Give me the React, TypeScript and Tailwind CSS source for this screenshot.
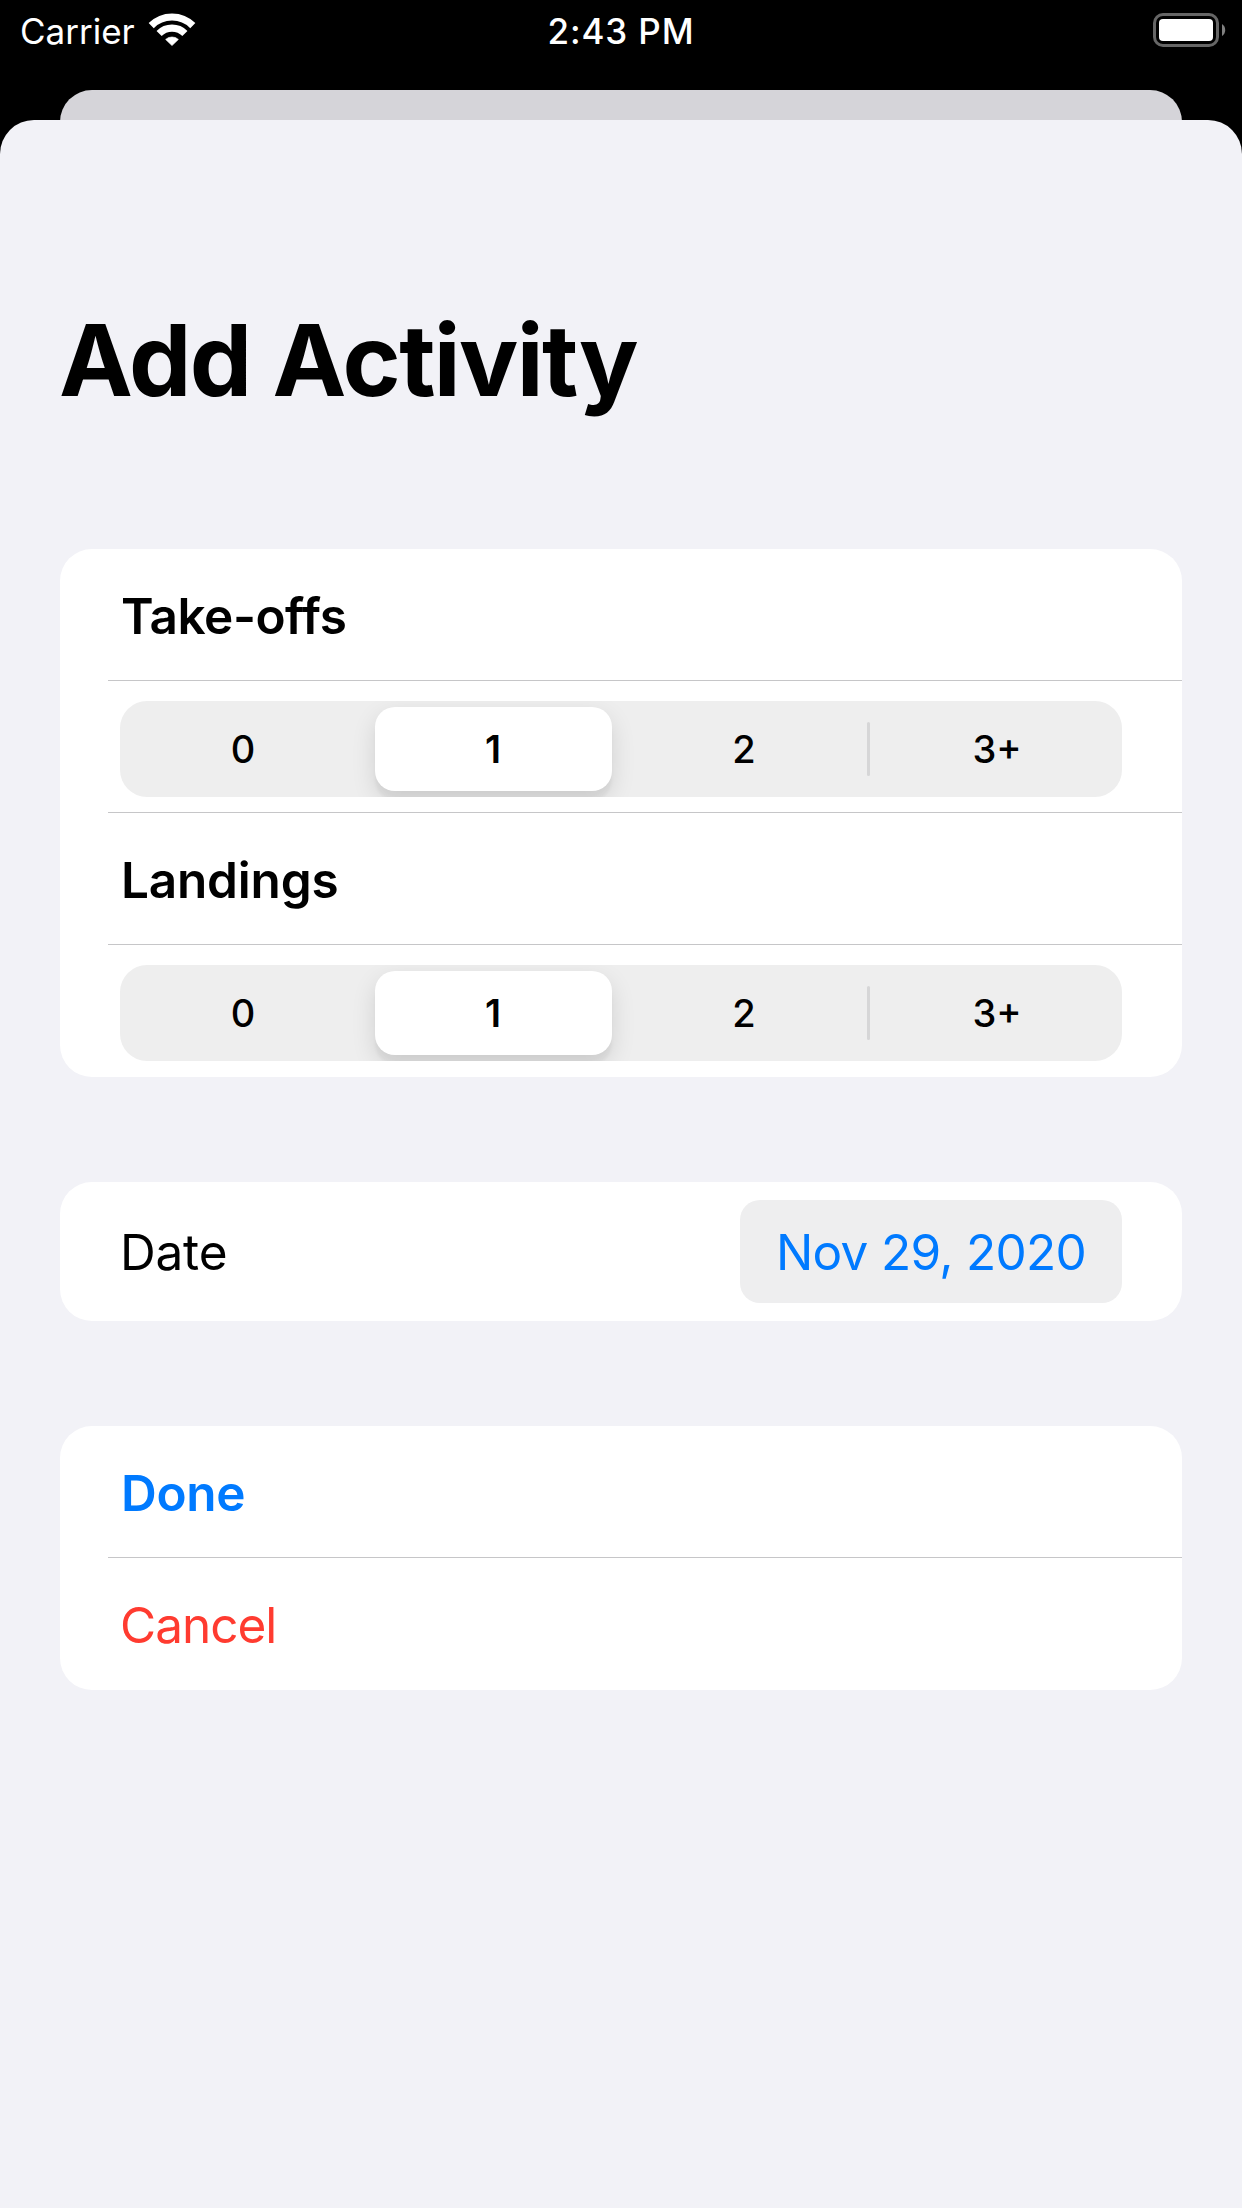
import type { ReactNode } from "react";

function WifiIcon() {
  return (
    <svg className="ml-[13px] mt-[13px] h-[34px] w-[48px]" viewBox="0 0 48 34" fill="none">
      <path d="M3.2 12.6 A29.4 29.4 0 0 1 44.8 12.6" stroke="#fff" strokeWidth="7.2" />
      <path d="M11.1 20.5 A18.2 18.2 0 0 1 36.9 20.5" stroke="#fff" strokeWidth="7.2" />
      <path
        d="M17.6 26.4 A9.6 9.6 0 0 1 30.4 26.4 L24 32.6 Z"
        fill="#fff"
        stroke="#fff"
        strokeWidth="0.6"
        strokeLinejoin="round"
      />
    </svg>
  );
}

function BatteryIcon() {
  return (
    <svg className="mr-[15px] mt-[13px] h-[34px] w-[74px]" viewBox="0 0 74 34" fill="none">
      <rect x="1.5" y="1.5" width="63" height="31" rx="8.5" stroke="#666" strokeWidth="3" />
      <rect x="6" y="6" width="54" height="22" rx="4" fill="#fff" />
      <path d="M69 11 A7.2 7.2 0 0 1 69 23 Z" fill="#808080" />
    </svg>
  );
}

function StatusBar() {
  return (
    <div className="grid h-[90px] grid-cols-3 items-start text-[35px] leading-[44px] text-white">
      <div className="flex pl-[20px]">
        <span className="pt-[9px]">Carrier</span>
        <WifiIcon />
      </div>
      <div className="pt-[9px] text-center font-medium tracking-[0.9px]">2:43 PM</div>
      <div className="flex justify-end">
        <BatteryIcon />
      </div>
    </div>
  );
}

function Card({ className, children }: { className: string; children: ReactNode }) {
  return <section className={`mx-[60px] overflow-hidden rounded-[32px] bg-white ${className}`}>{children}</section>;
}

function Row({ children, last = false }: { children: ReactNode; last?: boolean }) {
  return (
    <div
      className={`ml-[48px] flex h-[132px] items-center border-b pl-[13px] ${last ? "border-transparent" : "border-[#c6c6c8]"}`}
    >
      {children}
    </div>
  );
}

function SegmentedControl() {
  return (
    <div className="ml-[-1px] mt-[20px] flex h-[96px] w-[1002px] items-center self-start overflow-hidden rounded-[27px] bg-[#eeeeee] text-[38px] font-[480]">
      <div className="w-[255px] pr-[9px] text-center">0</div>
      <div className="flex h-[84px] w-[237px] items-center justify-center rounded-[20px] bg-white pr-[1px] font-[560] shadow-[0_9px_24px_rgba(0,0,0,0.12),0_9px_3px_rgba(0,0,0,0.04)]">
        1
      </div>
      <div className="w-[255px] pl-[9px] text-center">2</div>
      <div className="h-[54px] w-[3px] rounded-full bg-[#d6d6d7]" />
      <div className="flex-1 pl-[2px] text-center">3+</div>
    </div>
  );
}

export default function App() {
  return (
    <main className="flex h-[2208px] w-[1242px] flex-col overflow-hidden bg-black font-['Inter',sans-serif] text-black">
      <StatusBar />
      <div className="mx-[60px] h-[70px] shrink-0 rounded-t-[32px] bg-[#d5d4d9]" />
      <div className="relative mt-[-40px] flex-1 rounded-t-[34px] bg-[#f2f2f7]">
        <h1 className="ml-[59px] pt-[180px] text-[99px] font-bold leading-[120px] tracking-[-1.6px]">Add Activity</h1>

        <Card className="mt-[129px]">
          <Row>
            <h2 className="pt-[4px] text-[49.5px] font-semibold tracking-[-0.48px]">Take-offs</h2>
          </Row>
          <Row>
            <SegmentedControl />
          </Row>
          <Row>
            <h2 className="pt-[4px] text-[49.5px] font-semibold tracking-[-0.2px]">Landings</h2>
          </Row>
          <Row last>
            <SegmentedControl />
          </Row>
        </Card>

        <Card className="mt-[105px]">
          <div className="flex h-[139px] items-center justify-between pl-[60px] pr-[60px] text-[49.5px]">
            <span className="pt-[2px] tracking-[-0.2px]">Date</span>
            <button className="h-[103px] w-[382px] rounded-[20px] bg-[#eeeeef] pt-[2px] tracking-[-0.7px] text-[#007aff]">
              Nov 29, 2020
            </button>
          </div>
        </Card>

        <Card className="mt-[105px]">
          <Row>
            <button className="pt-[4px] text-[49.5px] font-semibold tracking-[-0.3px] text-[#007aff]">Done</button>
          </Row>
          <Row last>
            <button className="ml-[-1px] pt-[3px] text-[49.5px] tracking-[-1px] text-[#ff3b30]">Cancel</button>
          </Row>
        </Card>
      </div>
    </main>
  );
}
